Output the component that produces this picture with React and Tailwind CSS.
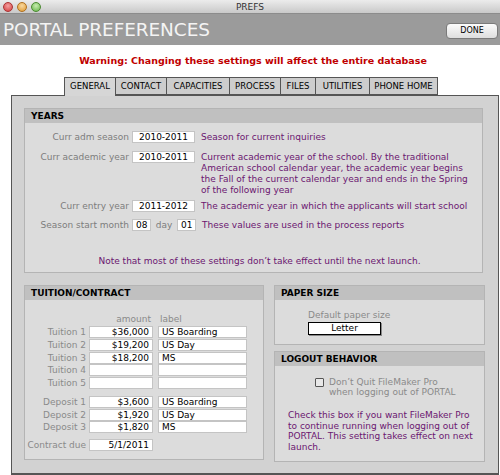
const tabs = ["GENERAL", "CONTACT", "CAPACITIES", "PROCESS", "FILES", "UTILITIES", "PHONE HOME"];
const tabWidths = ["w-[52px]", "w-[52px]", "w-[64px]", "w-[52px]", "w-[36px]", "w-[55px]", "w-[69px]"];

const Field = ({ value, className = "", align = "center" }) => (
  <div
    className={`h-[12px] bg-white border border-[#c4c4c4] text-black text-[9px] leading-[10px] px-[3px] ${
      align === "right" ? "text-right" : align === "left" ? "text-left" : "text-center"
    } ${className}`}
  >
    {value}
  </div>
);

const Section = ({ title, className = "", bodyClass = "", children }) => (
  <div className={`border border-[#b4b4b4] bg-[#dcdcdc] flex flex-col ${className}`}>
    <div className="h-[14px] bg-[#c0c0c0] px-[6px] text-[9px] leading-[14px] font-bold text-black">{title}</div>
    <div className={`flex-1 ${bodyClass}`}>{children}</div>
  </div>
);

const YearRow = ({ label, value, desc, className = "" }) => (
  <div className={`flex items-start ${className}`}>
    <div className="w-[107px] text-right text-[9px] leading-[12px] text-[#7c7c7c] pr-[3px]">{label}</div>
    <Field value={value} className="w-[63px]" />
    <div className="ml-[6px] text-[9px] leading-[11px] text-[#6b1670] mt-[1px] w-[270px]">{desc}</div>
  </div>
);

const tuition = [
  ["Tuition 1", "$36,000", "US Boarding"],
  ["Tuition 2", "$19,200", "US Day"],
  ["Tuition 3", "$18,200", "MS"],
  ["Tuition 4", "", ""],
  ["Tuition 5", "", ""],
];
const deposits = [
  ["Deposit 1", "$3,600", "US Boarding"],
  ["Deposit 2", "$1,920", "US Day"],
  ["Deposit 3", "$1,820", "MS"],
];

const MoneyRow = ({ label, amount, tag }) => (
  <div className="flex items-center">
    <div className="w-[64px] text-right pr-[3px] text-[9px] leading-[12px] text-[#8a8a8a]">{label}</div>
    <Field value={amount} align="right" className="w-[64px]" />
    <Field value={tag} align="left" className="w-[89px] ml-[5px]" />
  </div>
);

export default function App() {
  return (
    <div className="w-[500px] h-[475px] bg-white overflow-hidden font-['DejaVu_Sans',sans-serif] flex flex-col">
      {/* window title bar */}
      <div className="h-[14px] bg-gradient-to-b from-[#ececec] to-[#c9c9c9] border-b border-[#8c8c8c] flex items-center relative">
        <div className="flex gap-[4px] pl-[3px]">
          <span className="w-[10px] h-[10px] rounded-full bg-[radial-gradient(circle_at_50%_35%,#f4a0a0,#d23b3b)] border border-[#a33]" />
          <span className="w-[10px] h-[10px] rounded-full bg-[radial-gradient(circle_at_50%_35%,#f8d8a0,#e09a30)] border border-[#b07020]" />
          <span className="w-[10px] h-[10px] rounded-full bg-[radial-gradient(circle_at_50%_35%,#c8ecb0,#64b447)] border border-[#4a8a30]" />
        </div>
        <div className="absolute inset-0 text-center text-[9px] leading-[14px] text-[#333]">PREFS</div>
      </div>

      {/* header band */}
      <div className="h-[31px] bg-[#9b9b9b] flex items-center justify-between pl-[3px]">
        <div className="text-[#f4f4f4] text-[18.5px] leading-[20px] tracking-[-0.1px]">PORTAL PREFERENCES</div>
        <button className="w-[52px] h-[16px] mr-[2px] mt-[3px] rounded-[4px] border border-[#7a7a7a] bg-gradient-to-b from-[#fbfbfb] to-[#dedede] text-[8px] leading-[14px] text-black">
          DONE
        </button>
      </div>

      {/* warning */}
      <div className="h-[32px] flex items-center justify-center">
        <span className="text-[#c00000] font-bold text-[9.5px] pl-[6px]">
          Warning: Changing these settings will affect the entire database
        </span>
      </div>

      {/* tabs */}
      <div className="flex pl-[64px] h-[18px]">
        {tabs.map((t, i) => (
          <div
            key={t}
            className={`${tabWidths[i]} h-[18px] border border-[#555] text-center text-[8.5px] leading-[16px] text-black ${
              i === 0 ? "bg-[#d6d6d6] border-b-0 relative z-10 h-[19px]" : "bg-[#cdcdcd] -ml-px"
            }`}
          >
            {t}
          </div>
        ))}
      </div>

      {/* main panel */}
      <div className="ml-[11px] w-[488px] flex-1 border border-[#555] border-b-2 bg-[#d2d2d2] pl-[12px] pt-[12px] flex flex-col">
        <Section title="YEARS" className="w-[459px] h-[165px]" bodyClass="pt-[8px]">
          <YearRow label="Curr adm season" value="2010-2011" desc="Season for current inquiries" />
          <YearRow
            label="Curr academic year"
            value="2010-2011"
            desc="Current academic year of the school. By the traditional American school calendar year, the academic year begins the Fall of the current calendar year and ends in the Spring of the following year"
            className="mt-[8px]"
          />
          <YearRow
            label="Curr entry year"
            value="2011-2012"
            desc="The academic year in which the applicants will start school"
            className="mt-[4px]"
          />
          <div className="flex items-start mt-[7px]">
            <div className="w-[107px] text-right text-[9px] leading-[12px] text-[#7c7c7c] pr-[3px]">Season start month</div>
            <Field value="08" className="w-[19px]" />
            <div className="w-[26px] text-center text-[9px] leading-[12px] text-[#7c7c7c]">day</div>
            <Field value="01" className="w-[19px]" />
            <div className="ml-[6px] text-[9px] leading-[11px] text-[#6b1670] mt-[1px]">These values are used in the process reports</div>
          </div>
          <div className="mt-[25px] text-center pl-[12px] text-[9px] leading-[11px] text-[#6b1670]">
            Note that most of these settings don’t take effect until the next launch.
          </div>
        </Section>

        <div className="flex mt-[12px] gap-[10px]">
          <Section title="TUITION/CONTRACT" className="w-[240px] h-[175px]" bodyClass="pt-[14px]">
            <div className="flex text-[9px] leading-[11px] text-[#8a8a8a] mb-[1px]">
              <div className="w-[128px] text-right pr-[2px]">amount</div>
              <div className="ml-[7px]">label</div>
            </div>
            <div className="flex flex-col gap-[0.75px]">
              {tuition.map(([l, a, t]) => (
                <MoneyRow key={l} label={l} amount={a} tag={t} />
              ))}
            </div>
            <div className="flex flex-col gap-[0.5px] mt-[7px]">
              {deposits.map(([l, a, t]) => (
                <MoneyRow key={l} label={l} amount={a} tag={t} />
              ))}
            </div>
            <div className="flex items-center mt-[6px]">
              <div className="w-[64px] text-right pr-[3px] text-[9px] leading-[12px] text-[#8a8a8a] whitespace-nowrap">Contract due</div>
              <Field value="5/1/2011" align="right" className="w-[64px]" />
            </div>
          </Section>

          <div className="w-[211px] flex flex-col gap-[6px]">
            <Section title="PAPER SIZE" className="h-[60px]" bodyClass="pl-[33px] pt-[10px]">
              <div className="text-[9px] leading-[11px] text-[#8a8a8a]">Default paper size</div>
              <div className="mt-[1px] w-[73px] h-[13px] bg-white border border-black shadow-[1px_1px_0_#888] text-center text-[9px] leading-[11px] text-black">
                Letter
              </div>
            </Section>
            <Section title="LOGOUT BEHAVIOR" className="h-[111px]" bodyClass="pt-[11px]">
              <div className="flex items-start pl-[40px]">
                <span className="w-[9px] h-[9px] mt-[1px] border border-[#555] bg-[#e8e8e8] rounded-[1px]" />
                <div className="ml-[5px] text-[9px] leading-[10px] text-[#8a8a8a]">
                  Don’t Quit FileMaker Pro
                  <br />
                  when logging out of PORTAL
                </div>
              </div>
              <div className="mt-[13px] pl-[13px] pr-[10px] text-[9px] leading-[10.5px] text-[#6b1670]">
                Check this box if you want FileMaker Pro to continue running when logging out of PORTAL. This setting takes effect on next launch.
              </div>
            </Section>
          </div>
        </div>
      </div>
    </div>
  );
}
